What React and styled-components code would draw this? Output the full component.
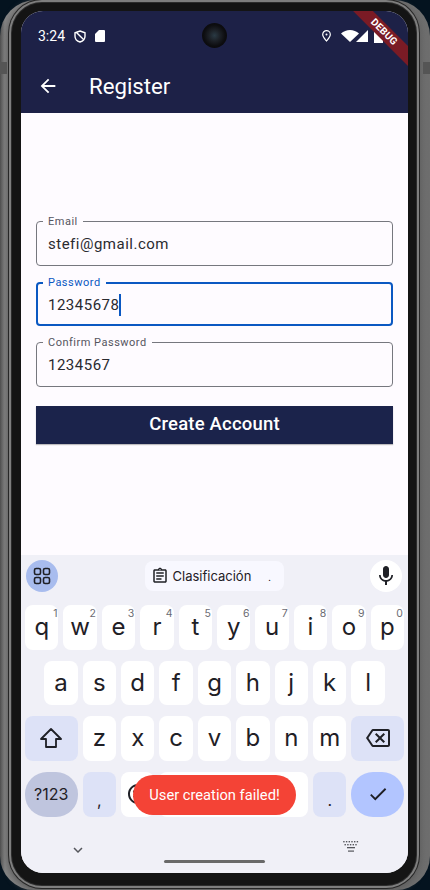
import React from "react";
import styled, { createGlobalStyle } from "styled-components";
import { MdArrowBack, MdMic, MdCheck, MdOutlineAssignment, MdOutlineBackspace, MdKeyboardArrowDown, MdOutlineSentimentSatisfied } from "react-icons/md";

const Global = createGlobalStyle`
  html, body { margin: 0; padding: 0; background: #04131f; }
  * { box-sizing: border-box; }
  #root { width: 430px; height: 890px; overflow: hidden; }
`;

const Frame = styled.div`
  position: relative;
  width: 430px;
  height: 890px;
  padding: 3px 14px 5px 12px;
  border-radius: 36px 36px 34px 34px;
  background: linear-gradient(90deg, #4e4e4e 0, #858585 5px, #6e6e6e 430px);
`;

const Bezel = styled.div`
  height: 100%;
  padding: 8px 8px 12px 9px;
  border-radius: 30px;
  background: #141414;
  box-shadow: 0 0 0 1px #2c2c2c, 0 0 0 3px #7e7e7e, 0 0 0 4px #262626, 0 2px 6px 5px #5e5e5e;
`;

const SideButton = styled.div`
  position: absolute;
  top: 62px;
  width: 7px;
  height: 12px;
  background: #555;
  ${(p) => (p.$right ? "right: 0;" : "left: 0;")}
`;

const Screen = styled.div`
  position: relative;
  height: 100%;
  border-radius: 22px;
  overflow: hidden;
  display: flex;
  flex-direction: column;
  background: #fefbff;
  font-family: Roboto, sans-serif;
`;

const Header = styled.header`
  height: 102px;
  flex: none;
  background: #1d2147;
  color: #fff;
  display: flex;
  flex-direction: column;
`;

const StatusBar = styled.div`
  height: 50px;
  padding: 0 25px 0 17px;
  display: flex;
  align-items: center;
  justify-content: space-between;
`;

const StatusGroup = styled.div`
  display: flex;
  align-items: center;
`;

const StatusSlot = styled.span`
  display: flex;
  margin-left: ${(p) => p.$ml || 0}px;
`;

const Time = styled.span`
  font-size: 14px;
  width: 25px;
  margin-right: 11px;
  white-space: nowrap;
`;

const Camera = styled.div`
  position: absolute;
  left: 181px;
  top: 12px;
  width: 25px;
  height: 25px;
  border-radius: 50%;
  background: radial-gradient(circle, #2a3a44 0, #1c2026 32%, #0d0d10 60%, #060606 100%);
`;

const Ribbon = styled.div`
  position: absolute;
  left: 313px;
  top: 14px;
  width: 100px;
  height: 14px;
  transform: rotate(45deg);
  background: #7a1b25;
  color: #fff;
  font-size: 10px;
  font-weight: 700;
  line-height: 14px;
  letter-spacing: 0.2px;
  text-align: center;
`;

const AppBar = styled.div`
  flex: 1;
  display: flex;
  align-items: center;
  padding: 0 0 2px 16px;
  gap: 30px;
  svg { flex: none; }
`;

const Title = styled.h1`
  margin: 0;
  font-size: 22.2px;
  font-weight: 400;
`;

const Content = styled.main`
  flex: 1;
  padding: 108px 15px 0;
  display: flex;
  flex-direction: column;
  gap: 16px;
`;

const Field = styled.div`
  position: relative;
  height: ${(p) => (p.$focused ? 44 : 45)}px;
  padding: 1px 0 0 ${(p) => (p.$focused ? 10 : 11)}px;
  border: ${(p) => (p.$focused ? "2px solid #0a58c2" : "1px solid #76777e")};
  border-radius: 4px;
  display: flex;
  align-items: center;
  font-size: 15px;
  letter-spacing: 0.5px;
  color: #2a2a2f;
`;

const FieldLabel = styled.label`
  position: absolute;
  top: ${(p) => (p.$focused ? -8 : -7)}px;
  left: ${(p) => (p.$focused ? 5 : 6)}px;
  padding: 0 5px;
  background: #fefbff;
  font-size: 11px;
  line-height: 13px;
  letter-spacing: 0.5px;
  color: ${(p) => (p.$focused ? "#0a58c2" : "#55555e")};
`;

const Caret = styled.span`
  display: inline-block;
  width: 2px;
  height: 22px;
  background: #0a58c2;
`;

const PrimaryButton = styled.button`
  height: 38px;
  margin-top: 3px;
  padding: 0 0 2px;
  border: 0;
  background: #1b234b;
  color: #fff;
  font-family: Roboto, sans-serif;
  font-size: 18.5px;
  font-weight: 500;
  letter-spacing: 0.2px;
  box-shadow: 0 1px 1px rgba(0,0,0,.25);
`;

const Keyboard = styled.section`
  flex: none;
  height: 318px;
  background: #f0f0f7;
  padding: 5px 4px 0;
  color: #1f2026;
  font-family: Inter, sans-serif;
  display: flex;
  flex-direction: column;
`;

const Toolbar = styled.div`
  height: 32px;
  margin: 0 2px 13px 1px;
  display: flex;
  align-items: center;
  justify-content: space-between;
`;

const RoundButton = styled.div`
  width: 32px;
  height: 32px;
  border-radius: 50%;
  display: flex;
  align-items: center;
  justify-content: center;
  background: ${(p) => p.$bg};
`;

const Chip = styled.div`
  width: 139px;
  height: 30px;
  padding-left: 6px;
  border-radius: 8px;
  background: #f8f8ff;
  display: flex;
  align-items: center;
  gap: 4px;
  font-size: 13px;
  white-space: nowrap;
`;

const ChipDot = styled.span`
  margin-left: 13px;
  font-size: 9px;
  margin-top: 3px;
`;

const Rows = styled.div`
  display: flex;
  flex-direction: column;
  gap: 11px;
`;

const Row = styled.div`
  display: flex;
  justify-content: center;
  gap: 5px;
  height: 44.7px;
`;

const Key = styled.div`
  position: relative;
  width: ${(p) => p.$w || 33.4}px;
  flex: none;
  padding-bottom: 1px;
  border-radius: ${(p) => p.$radius || 8}px;
  background: ${(p) => p.$bg || "#fff"};
  display: flex;
  align-items: center;
  justify-content: center;
  font-size: 24px;
  line-height: 1;
`;

const Hint = styled.sup`
  position: absolute;
  top: 4px;
  right: 1px;
  font-size: 10.5px;
  line-height: 1;
  color: #6a6b72;
`;

const SmallLabel = styled.span`
  font-size: 16px;
`;

const Punct = styled.span`
  font-size: 16px;
  margin-top: 12px;
`;

const NavBar = styled.div`
  position: relative;
  flex: 1;
  display: flex;
  align-items: flex-start;
  justify-content: space-between;
  padding: 24px 45px 0 44px;
`;

const HomePill = styled.div`
  position: absolute;
  left: 139px;
  top: 43px;
  width: 101px;
  height: 3px;
  border-radius: 2px;
  background: #696969;
`;

const Toast = styled.div`
  position: absolute;
  left: 112px;
  top: 764px;
  width: 163px;
  height: 40px;
  border-radius: 20px;
  background: #f44336;
  color: #fff;
  font-size: 14.7px;
  display: flex;
  align-items: center;
  justify-content: center;
`;

const ShieldIcon = () => (
  <svg width="12" height="13" viewBox="0 0 12 13" fill="none" stroke="#fff" strokeWidth="1.4">
    <path d="M6 1 L11 2.8 V6.2 C11 9 8.8 11.2 6 12 C3.2 11.2 1 9 1 6.2 V2.8 Z" />
    <path d="M2.5 2.5 L9.8 9.8" />
  </svg>
);

const SdIcon = () => (
  <svg width="10" height="12" viewBox="0 0 10 12">
    <path d="M4 0 H9 a1 1 0 0 1 1 1 V11 a1 1 0 0 1 -1 1 H1 a1 1 0 0 1 -1 -1 V4 Z" fill="#fff" />
  </svg>
);

const PinIcon = () => (
  <svg width="9" height="12" viewBox="0 0 9 12" fill="none" stroke="#fff" strokeWidth="1.2">
    <path d="M4.5 11 C2.6 8.6 0.7 6.6 0.7 4.4 A3.8 3.8 0 0 1 8.3 4.4 C8.3 6.6 6.4 8.6 4.5 11 Z" />
    <circle cx="4.5" cy="4.4" r="1" fill="#fff" stroke="none" />
  </svg>
);

const WifiIcon = () => (
  <svg width="18" height="12" viewBox="0 0 18 12">
    <path d="M0 3.6 C5 -1.2 13 -1.2 18 3.6 L9 12 Z" fill="#fff" />
  </svg>
);

const SignalIcon = () => (
  <svg width="12" height="12" viewBox="0 0 12 12">
    <path d="M12 0 V12 H0 Z" fill="#fff" />
  </svg>
);

const BatteryIcon = () => (
  <svg width="9" height="13" viewBox="0 0 9 13">
    <path d="M3 0h3v1.5h3V13H0V1.5h3z" fill="#fff" />
  </svg>
);

const GridIcon = () => (
  <svg width="18" height="18" viewBox="0 0 18 18" fill="none" stroke="#1f2026" strokeWidth="1.6">
    <rect x="1.5" y="1.5" width="6" height="6" rx="1.6" />
    <rect x="10.5" y="1.5" width="6" height="6" rx="1.6" />
    <rect x="1.5" y="10.5" width="6" height="6" rx="1.6" />
    <rect x="10.5" y="10.5" width="6" height="6" rx="1.6" />
  </svg>
);

const ShiftIcon = () => (
  <svg width="22" height="22" viewBox="0 0 22 22" fill="none" stroke="#1f2026" strokeWidth="1.8" strokeLinejoin="round">
    <path d="M11 2 L21 12 H16 V20 H6 V12 H1 Z" />
  </svg>
);

const KeyboardGlyph = () => (
  <svg width="16" height="11" viewBox="0 0 16 11" fill="#55565c">
    {[0, 1, 2, 3, 4, 5].map((i) => <rect key={i} x={i * 2.7 + 0.2} y="0" width="1.4" height="1.4" />)}
    {[0, 1, 2, 3, 4].map((i) => <rect key={i} x={i * 2.7 + 1.5} y="3" width="1.4" height="1.4" />)}
    <rect x="4" y="6" width="8" height="1.3" />
    <rect x="5" y="9.5" width="6" height="1.2" />
  </svg>
);

const rowOne = [["q", 1], ["w", 2], ["e", 3], ["r", 4], ["t", 5], ["y", 6], ["u", 7], ["i", 8], ["o", 9], ["p", 0]];
const ACCENT = "#dde2f7";
const WIDE = 52.7;

export default function App() {
  return (
    <>
      <Global />
      <Frame>
        <SideButton />
        <SideButton $right />
        <Bezel>
          <Screen>
            <Header>
              <StatusBar>
                <StatusGroup>
                  <Time>3:24</Time>
                  <ShieldIcon />
                  <StatusSlot $ml={9}><SdIcon /></StatusSlot>
                </StatusGroup>
                <StatusGroup>
                  <PinIcon />
                  <StatusSlot $ml={10}><WifiIcon /></StatusSlot>
                  <StatusSlot $ml={-3}><SignalIcon /></StatusSlot>
                  <StatusSlot $ml={6}><BatteryIcon /></StatusSlot>
                </StatusGroup>
              </StatusBar>
              <AppBar>
                <MdArrowBack size={22} color="#fff" />
                <Title>Register</Title>
              </AppBar>
            </Header>
            <Camera />
            <Ribbon>DEBUG</Ribbon>
            <Content>
              <Field>
                <FieldLabel>Email</FieldLabel>
                stefi@gmail.com
              </Field>
              <Field $focused>
                <FieldLabel $focused>Password</FieldLabel>
                12345678<Caret />
              </Field>
              <Field>
                <FieldLabel>Confirm Password</FieldLabel>
                1234567
              </Field>
              <PrimaryButton>Create Account</PrimaryButton>
            </Content>
            <Keyboard>
              <Toolbar>
                <RoundButton $bg="#a8bcee"><GridIcon /></RoundButton>
                <Chip>
                  <MdOutlineAssignment size={18} color="#1f2026" />
                  Clasificación
                  <ChipDot>.</ChipDot>
                </Chip>
                <RoundButton $bg="#fff"><MdMic size={24} color="#1f2026" /></RoundButton>
              </Toolbar>
              <Rows>
                <Row>
                  {rowOne.map(([l, n]) => (
                    <Key key={l}>{l}<Hint>{n}</Hint></Key>
                  ))}
                </Row>
                <Row>
                  {"asdfghjkl".split("").map((l) => <Key key={l}>{l}</Key>)}
                </Row>
                <Row>
                  <Key $w={WIDE} $bg={ACCENT}><ShiftIcon /></Key>
                  {"zxcvbnm".split("").map((l) => <Key key={l}>{l}</Key>)}
                  <Key $w={WIDE} $bg={ACCENT}><MdOutlineBackspace size={24} color="#1f2026" /></Key>
                </Row>
                <Row>
                  <Key $w={WIDE} $radius={22} $bg="#bfc5de"><SmallLabel>?123</SmallLabel></Key>
                  <Key $bg={ACCENT}><Punct>,</Punct></Key>
                  <Key><MdOutlineSentimentSatisfied size={24} color="#1f2026" /></Key>
                  <Key $w={148.6} />
                  <Key $bg={ACCENT}><Punct>.</Punct></Key>
                  <Key $w={WIDE} $radius={22} $bg="#b2c5ff"><MdCheck size={22} color="#1f2026" /></Key>
                </Row>
              </Rows>
              <NavBar>
                <MdKeyboardArrowDown size={18} color="#55565c" />
                <KeyboardGlyph />
                <HomePill />
              </NavBar>
            </Keyboard>
            <Toast>User creation failed!</Toast>
          </Screen>
        </Bezel>
      </Frame>
    </>
  );
}
